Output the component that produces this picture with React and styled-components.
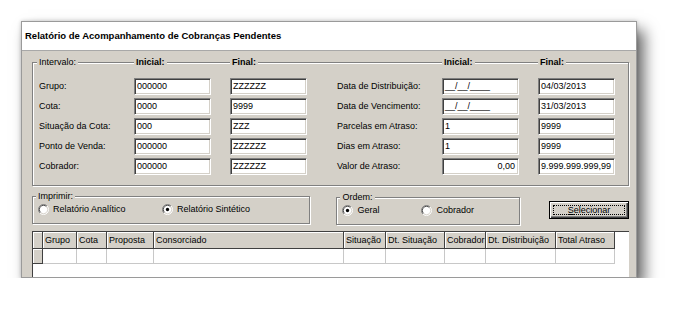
import React from "react";
import styled, { createGlobalStyle } from "styled-components";

const GlobalStyle = createGlobalStyle`
  body {
    margin: 0;
    background: #ffffff;
    font-family: "Liberation Sans", Arial, sans-serif;
    font-size: 9px;
    color: #000;
  }
`;

const fieldRows = [
  ["Grupo:", "000000", "ZZZZZZ", "Data de Distribuição:", "__/__/____", "04/03/2013"],
  ["Cota:", "0000", "9999", "Data de Vencimento:", "__/__/____", "31/03/2013"],
  ["Situação da Cota:", "000", "ZZZ", "Parcelas em Atraso:", "1", "9999"],
  ["Ponto de Venda:", "000000", "ZZZZZZ", "Dias em Atraso:", "1", "9999"],
  ["Cobrador:", "000000", "ZZZZZZ", "Valor de Atraso:", "0,00", "9.999.999.999,99", true],
];

const columns = [
  { title: "", width: 10 },
  { title: "Grupo", width: 34 },
  { title: "Cota", width: 30 },
  { title: "Proposta", width: 47 },
  { title: "Consorciado", width: 190 },
  { title: "Situação", width: 42 },
  { title: "Dt. Situação", width: 59 },
  { title: "Cobrador", width: 41 },
  { title: "Dt. Distribuição", width: 70 },
  { title: "Total Atraso", width: 59 },
];

function Radio({ checked }) {
  return (
    <svg width="11" height="11" viewBox="0 0 12 12">
      <circle cx="6" cy="6" r="5" fill="#fff" />
      <path d="M2.1 9.9 A5.5 5.5 0 0 1 9.9 2.1" fill="none" stroke="#808080" />
      <path d="M9.9 2.1 A5.5 5.5 0 0 1 2.1 9.9" fill="none" stroke="#fff" />
      <path d="M2.8 9.2 A4.5 4.5 0 0 1 9.2 2.8" fill="none" stroke="#404040" />
      <path d="M9.2 2.8 A4.5 4.5 0 0 1 2.8 9.2" fill="none" stroke="#d4d0c8" />
      {checked && <circle cx="6" cy="6" r="1.8" fill="#000" />}
    </svg>
  );
}

export default function App() {
  return (
    <>
      <GlobalStyle />
      <Window>
        <TitleBar>Relatório de Acompanhamento de Cobranças Pendentes</TitleBar>
        <Body>
          <GroupBox $pad="0 6px 10px 6px">
            <FieldGrid>
              <Legend $shift>Intervalo:</Legend>
              <Legend $bold>Inicial:</Legend>
              <Legend $bold>Final:</Legend>
              <span />
              <Legend $bold>Inicial:</Legend>
              <Legend $bold>Final:</Legend>
            </FieldGrid>
            <FieldGrid $rows>
              {fieldRows.map((row) => (
                <React.Fragment key={row[0]}>
                  <FieldLabel>{row[0]}</FieldLabel>
                  <Field>{row[1]}</Field>
                  <Field>{row[2]}</Field>
                  <FieldLabel>{row[3]}</FieldLabel>
                  <Field $right={row[6]}>{row[4]}</Field>
                  <Field $right={row[6]}>{row[5]}</Field>
                </React.Fragment>
              ))}
            </FieldGrid>
          </GroupBox>

          <BottomRow>
            <GroupBox $w={279} $pad="0 6px 8px 5px">
              <LegendLine>
                <Legend $shift>Imprimir:</Legend>
              </LegendLine>
              <Options>
                <Option $w={124}>
                  <Radio />
                  Relatório Analítico
                </Option>
                <Option>
                  <Radio checked />
                  Relatório Sintético
                </Option>
              </Options>
            </GroupBox>
            <GroupBox $w={184} $pad="0 6px 8px 5px" $ml={26} $mt={1}>
              <LegendLine>
                <Legend $shift>Ordem:</Legend>
              </LegendLine>
              <Options>
                <Option $w={79}>
                  <Radio checked />
                  Geral
                </Option>
                <Option>
                  <Radio />
                  Cobrador
                </Option>
              </Options>
            </GroupBox>
            <Button>
              <Focus>
                <u>S</u>elecionar
              </Focus>
            </Button>
          </BottomRow>

          <DataGrid>
            <GridRow>
              {columns.map((c, i) => (
                <HeaderCell key={i} $w={c.width}>
                  {c.title}
                </HeaderCell>
              ))}
            </GridRow>
            <GridRow>
              {columns.map((c, i) =>
                i === 0 ? (
                  <Indicator key={i} $w={c.width} />
                ) : (
                  <DataCell key={i} $w={c.width} />
                )
              )}
            </GridRow>
          </DataGrid>
        </Body>
      </Window>
    </>
  );
}

const Window = styled.div`
  margin: 21px 0 0 21px;
  width: 616px;
  height: 257px;
  box-sizing: border-box;
  border: 1px solid #9a9a9a;
  overflow: hidden;
  display: flex;
  flex-direction: column;
  background: #d4d0c8;
  box-shadow: 7px 9px 14px rgba(0, 0, 0, 0.6), 0 0 4px rgba(0, 0, 0, 0.2);
`;

const TitleBar = styled.div`
  height: 28px;
  flex-shrink: 0;
  background: #fff;
  border-bottom: 1px solid #a8a8a8;
  padding-left: 3px;
  font-weight: 700;
  font-size: 9.5px;
  line-height: 28px;
`;

const Body = styled.div`
  flex: 1;
  padding: 11px 7px 0 10px;
  display: flex;
  flex-direction: column;
`;

const GroupBox = styled.div`
  box-sizing: border-box;
  width: ${(p) => (p.$w ? `${p.$w}px` : "auto")};
  margin-left: ${(p) => p.$ml || 0}px;
  margin-top: ${(p) => p.$mt || 0}px;
  padding: ${(p) => p.$pad};
  border: 1px solid #808080;
  box-shadow: inset 1px 1px 0 #fff, 1px 1px 0 #fff;
`;

const FieldGrid = styled.div`
  display: grid;
  grid-template-columns: 95px 96px 107px 105px 96px 77px;
  row-gap: 3px;
  margin-top: ${(p) => (p.$rows ? "9px" : "-7px")};
`;

const LegendLine = styled.div`
  display: flex;
  margin-top: -7px;
`;

const Legend = styled.span`
  justify-self: start;
  height: 13px;
  line-height: 13px;
  padding: 0 2px;
  margin-left: ${(p) => (p.$shift ? "-2px" : "0")};
  background: #d4d0c8;
  font-weight: ${(p) => (p.$bold ? 700 : 400)};
`;

const FieldLabel = styled.span`
  line-height: 17px;
  white-space: nowrap;
`;

const Field = styled.div`
  box-sizing: border-box;
  width: 77px;
  height: 17px;
  padding: 0 3px 0 2px;
  background: #fff;
  border-style: solid;
  border-width: 1px;
  border-color: #808080 #fff #fff #808080;
  box-shadow: inset 1px 1px 0 #404040, inset -1px -1px 0 #d4d0c8;
  line-height: 15px;
  white-space: nowrap;
  overflow: hidden;
  text-align: ${(p) => (p.$right ? "right" : "left")};
`;

const BottomRow = styled.div`
  display: flex;
  align-items: flex-start;
  margin-top: 10px;
`;

const Options = styled.div`
  display: flex;
  align-items: center;
  height: 12px;
`;

const Option = styled.label`
  display: flex;
  align-items: center;
  gap: 4px;
  width: ${(p) => (p.$w ? `${p.$w}px` : "auto")};
  white-space: nowrap;
`;

const Button = styled.div`
  box-sizing: border-box;
  width: 80px;
  height: 18px;
  margin: 5px 0 0 29px;
  padding: 3px;
  display: flex;
  border: 1px solid #000;
  box-shadow: inset 1px 1px 0 #fff, inset -1px -1px 0 #404040,
    inset -2px -2px 0 #808080;
`;

const Focus = styled.span`
  flex: 1;
  border: 1px dotted #000;
  display: flex;
  align-items: center;
  justify-content: center;
  line-height: 9px;
`;

const DataGrid = styled.div`
  box-sizing: border-box;
  width: 597px;
  height: 60px;
  margin-top: 6px;
  flex-shrink: 0;
  background: #fff;
  border-top: 1px solid #404040;
  border-left: 1px solid #404040;
`;

const GridRow = styled.div`
  display: flex;
`;

const HeaderCell = styled.div`
  box-sizing: border-box;
  width: ${(p) => p.$w}px;
  height: 17px;
  padding-left: 2px;
  line-height: 16px;
  background: #d4d0c8;
  border-right: 1px solid #404040;
  border-bottom: 1px solid #404040;
  box-shadow: inset 1px 1px 0 #fff;
  white-space: nowrap;
  overflow: hidden;
`;

const Indicator = styled.div`
  box-sizing: border-box;
  width: ${(p) => p.$w}px;
  height: 15px;
  background: #d4d0c8;
  border-right: 1px solid #404040;
  border-bottom: 1px solid #404040;
  box-shadow: inset 1px 1px 0 #fff;
`;

const DataCell = styled.div`
  box-sizing: border-box;
  width: ${(p) => p.$w}px;
  height: 15px;
  border-right: 1px solid #c8c8c8;
  border-bottom: 1px solid #c8c8c8;
`;
